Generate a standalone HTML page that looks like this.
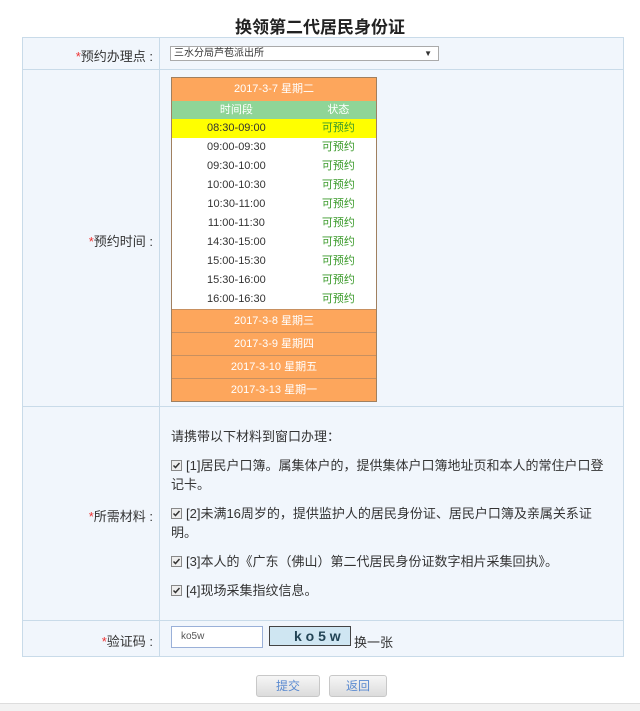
<!DOCTYPE html>
<html><head><meta charset="utf-8"><style>
*{margin:0;padding:0;box-sizing:border-box}
body{width:640px;height:711px;background:#fff;font-family:"Liberation Sans","Noto Sans CJK SC",sans-serif;color:#333;position:relative;overflow:hidden}
.abs{position:absolute}
h1{position:absolute;top:13px;left:0;width:640px;text-align:center;font-size:17px;font-weight:bold;color:#222}
.tbl{position:absolute;left:22px;top:37px;width:602px;height:620px;border:1px solid #c9dbe9;background:#f1f6fc}
.hl{position:absolute;left:0;width:600px;height:1px;background:#c9dbe9}
.vl{position:absolute;left:136px;top:0;width:1px;height:618px;background:#c9dbe9}
.lab{position:absolute;left:0;width:130px;text-align:right;font-size:13px;color:#333}
.lab i{font-style:normal;color:#e33}
.cal{position:absolute;left:171px;top:77px;width:206px;border:1px solid #a08060;background:#fff;font-size:11px}
.o{background:#fda65c;color:#fff;text-align:center;height:23px;line-height:23px;border-top:1px solid #c89060}
.g{background:#8fd597;color:#fff;height:18px;line-height:18px;display:flex}
.r{height:19px;line-height:19px;display:flex;color:#333}
.r span:first-child,.g span:first-child{width:130px;text-align:center}
.r span:last-child,.g span:last-child{width:76px;text-align:center}
.r span:last-child{color:#3a9a2a}
.y{background:#ff0}
.m{position:absolute;left:171px;font-size:13px;color:#333;line-height:19px;width:440px}
.cb{display:inline-block;width:11px;height:11px;margin-right:4px;vertical-align:-1px}
.btn{position:absolute;top:675px;height:22px;border:1px solid #c8c8c8;border-radius:3px;background:linear-gradient(#f6f6f6,#dcdcdc);color:#5a8ad0;font-size:12px;text-align:center;line-height:20px}
</style></head><body>
<h1>换领第二代居民身份证</h1>
<div class="tbl">
<div class="hl" style="top:31px"></div>
<div class="hl" style="top:368px"></div>
<div class="hl" style="top:582px"></div>
<div class="vl"></div>
<div class="lab" style="top:8px"><i>*</i>预约办理点 :</div>
<div class="lab" style="top:193px"><i>*</i>预约时间 :</div>
<div class="lab" style="top:468px"><i>*</i>所需材料 :</div>
<div class="lab" style="top:593px"><i>*</i>验证码 :</div>
</div>
<div class="abs" style="left:170px;top:46px;width:269px;height:15px;border:1px solid #aaa;background:#fff;font-size:10px;line-height:13px;padding-left:3px">三水分局芦苞派出所<span style="position:absolute;right:6px;font-size:8px">▼</span></div>
<div class="cal">
<div class="o" style="border-top:0">2017-3-7 星期二</div>
<div class="g"><span>时间段</span><span>状态</span></div>
<div class="r y"><span>08:30-09:00</span><span>可预约</span></div>
<div class="r"><span>09:00-09:30</span><span>可预约</span></div>
<div class="r"><span>09:30-10:00</span><span>可预约</span></div>
<div class="r"><span>10:00-10:30</span><span>可预约</span></div>
<div class="r"><span>10:30-11:00</span><span>可预约</span></div>
<div class="r"><span>11:00-11:30</span><span>可预约</span></div>
<div class="r"><span>14:30-15:00</span><span>可预约</span></div>
<div class="r"><span>15:00-15:30</span><span>可预约</span></div>
<div class="r"><span>15:30-16:00</span><span>可预约</span></div>
<div class="r"><span>16:00-16:30</span><span>可预约</span></div>
<div class="o">2017-3-8 星期三</div>
<div class="o">2017-3-9 星期四</div>
<div class="o">2017-3-10 星期五</div>
<div class="o">2017-3-13 星期一</div>
</div>
<div class="m" style="top:427px">请携带以下材料到窗口办理：</div>
<div class="m" style="top:456px"><svg class="cb" viewBox="0 0 11 11"><rect x=".5" y=".5" width="10" height="10" fill="#eee" stroke="#888"/><path d="M2.5 5.5l2 2 4-4.5" stroke="#333" stroke-width="1.5" fill="none"/></svg>[1]居民户口簿。属集体户的，提供集体户口簿地址页和本人的常住户口登记卡。</div>
<div class="m" style="top:504px"><svg class="cb" viewBox="0 0 11 11"><rect x=".5" y=".5" width="10" height="10" fill="#eee" stroke="#888"/><path d="M2.5 5.5l2 2 4-4.5" stroke="#333" stroke-width="1.5" fill="none"/></svg>[2]未满16周岁的，提供监护人的居民身份证、居民户口簿及亲属关系证明。</div>
<div class="m" style="top:552px"><svg class="cb" viewBox="0 0 11 11"><rect x=".5" y=".5" width="10" height="10" fill="#eee" stroke="#888"/><path d="M2.5 5.5l2 2 4-4.5" stroke="#333" stroke-width="1.5" fill="none"/></svg>[3]本人的《广东（佛山）第二代居民身份证数字相片采集回执》。</div>
<div class="m" style="top:581px"><svg class="cb" viewBox="0 0 11 11"><rect x=".5" y=".5" width="10" height="10" fill="#eee" stroke="#888"/><path d="M2.5 5.5l2 2 4-4.5" stroke="#333" stroke-width="1.5" fill="none"/></svg>[4]现场采集指纹信息。</div>
<div class="abs" style="left:171px;top:626px;width:92px;height:22px;border:1px solid #9ab0d8;background:#fff;font-size:10px;line-height:20px;padding-left:9px;color:#555">ko5w</div>
<div class="abs" style="left:269px;top:626px;width:82px;height:20px;border:1px solid #444;background:#cfe6f2;font-size:14px;font-weight:bold;color:#245;line-height:18px;padding-left:24px">k o 5 w</div>
<div class="abs" style="left:354px;top:632px;font-size:13px;color:#333">换一张</div>
<div class="btn" style="left:256px;width:64px">提交</div>
<div class="btn" style="left:329px;width:58px">返回</div>
<div class="abs" style="left:0;top:703px;width:640px;height:8px;background:#f2f2f2;border-top:1px solid #ddd"></div>
</body></html>
